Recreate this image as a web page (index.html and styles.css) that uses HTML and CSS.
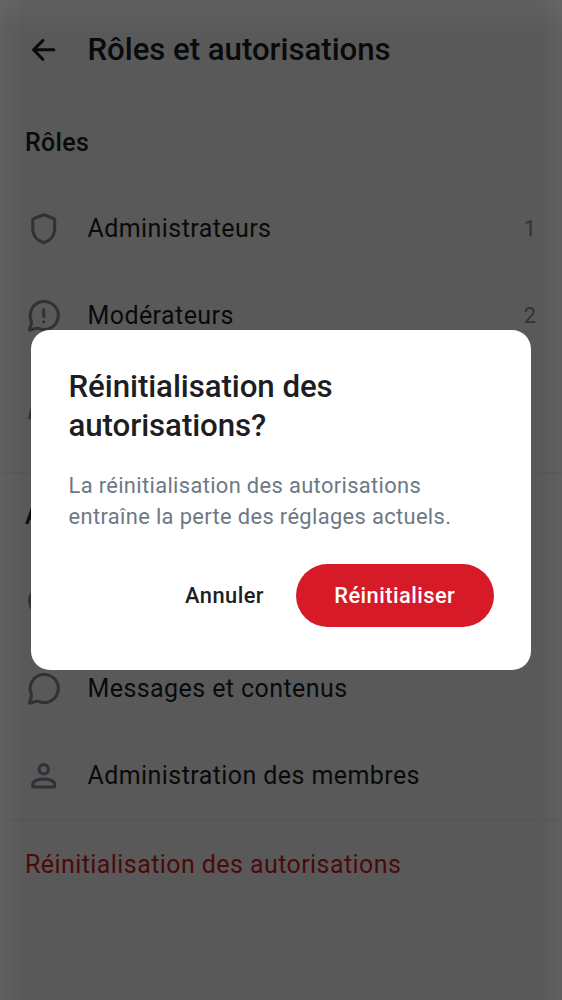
FILE: index.html
```html
<!DOCTYPE html>
<html lang="fr">
<head>
<meta charset="utf-8">
<title>Rôles et autorisations</title>
<link rel="stylesheet" href="styles.css">
</head>
<body>
<main class="screen">
  <header class="app-bar">
    <svg class="icon back" viewBox="0 0 24 24"><path d="M18.400 12H5.800M11.400 6.100L5.500 12l5.900 6.100"/></svg>
    <h1 class="app-title">Rôles et autorisations</h1>
  </header>
  <section class="section roles">
    <h2 class="section-title">Rôles</h2>
    <div class="row">
      <svg class="icon" viewBox="0 0 24 24"><path d="M11.500 3.200Q12 3 12.500 3.200L18.300 5.400Q19 5.700 19 6.400V12C19 16.300 16.200 19.700 12 21C7.800 19.700 5 16.300 5 12V6.400Q5 5.700 5.700 5.400Z"/></svg>
      <span class="label">Administrateurs</span><span class="count">1</span>
    </div>
    <div class="row">
      <svg class="icon" viewBox="0 0 24 24"><path d="M4 15.300A9 9 0 1 1 8.700 20.100C6.700 19.600 4.700 21 2.800 21.200C3 19.200 4.700 17.500 4 15.300ZM12 8v4.500M12 15.900v.1"/></svg>
      <span class="label">Modérateurs</span><span class="count">2</span>
    </div>
    <div class="row">
      <svg class="icon" viewBox="0 0 24 24"><path d="M3 21l1.500-6L16 3.500l4.500 4.500L9 19.500z"/></svg>
    </div>
  </section>
  <section class="section">
    <h2 class="section-title">A</h2>
    <div class="row">
      <svg class="icon" viewBox="0 0 24 24"><circle cx="12" cy="12" r="9"/></svg>
    </div>
    <div class="row">
      <svg class="icon" viewBox="0 0 24 24"><path d="M4 15.300A9 9 0 1 1 8.700 20.100C6.700 19.600 4.700 21 2.800 21.200C3 19.200 4.700 17.500 4 15.300Z"/></svg>
      <span class="label">Messages et contenus</span>
    </div>
    <div class="row">
      <svg class="icon" viewBox="0 0 24 24"><circle cx="12" cy="7.900" r="3"/><path d="M5 17.400C5 15.300 8.200 14.200 12 14.200S19 15.300 19 17.400V18.400Q19 19.200 18.200 19.200H5.800Q5 19.200 5 18.400Z"/></svg>
      <span class="label">Administration des membres</span>
    </div>
  </section>
  <div class="row"><span class="label danger">Réinitialisation des autorisations</span></div>
</main>
<div class="scrim">
  <div class="dialog" role="dialog">
    <h2 class="dialog-title">Réinitialisation des autorisations?</h2>
    <p class="dialog-text">La réinitialisation des autorisations entraîne la perte des réglages actuels.</p>
    <div class="actions">
      <button class="btn">Annuler</button>
      <button class="btn primary">Réinitialiser</button>
    </div>
  </div>
</div>
</body>
</html>
```
FILE: styles.css
```css
* { box-sizing: border-box; }
body { margin: 0; font-family: Roboto, sans-serif; color: #1c1e24; background: #fff; }
h1, h2, p { margin: 0; font-weight: 500; }
.screen { height: 1000px; overflow: hidden; }
.app-bar { height: 99.5px; padding: 0 25px; display: flex; align-items: center; gap: 25px; }
.app-title { font-size: 31.25px; letter-spacing: -.06px; }
.section { border-bottom: 1px solid #f0f0f0; }
.roles { padding-bottom: 24.5px; }
.section-title { height: 85px; line-height: 85px; padding-left: 25px; font-size: 25px; letter-spacing: .3px; }
.section + .section .section-title { height: 84.5px; }
.row { height: 87.5px; padding: 0 26px 0 25px; display: flex; align-items: center; gap: 25px; }
.label { font-size: 25px; letter-spacing: .42px; flex: 1; }
.danger { color: #d71a28; }
.count { font-size: 21.875px; color: #868f9b; }
.icon { width: 37.5px; height: 37.5px; fill: none; stroke: #868f9b; stroke-width: 2; stroke-linecap: round; stroke-linejoin: round; }
.back { stroke: #1c1e24; }
/* The dimming layer is lightest along the top and side edges. */
.scrim {
  position: absolute; inset: 0; height: 1000px;
  display: flex; align-items: center; justify-content: center;
  background:
    linear-gradient(180deg, rgba(255, 255, 255, .045), transparent 32px),
    linear-gradient(90deg, rgba(255, 255, 255, .04), transparent 24px),
    linear-gradient(270deg, rgba(255, 255, 255, .04), transparent 24px),
    rgba(0, 0, 0, .65);
}
.dialog { width: 500px; height: 340px; padding: 37px 37.5px; border-radius: 19px; background: #fff; }
.dialog-title { font-size: 31.25px; line-height: 39px; letter-spacing: -.07px; }
.dialog-text { margin-top: 24.5px; font-size: 21.875px; font-weight: 400; line-height: 31.25px; letter-spacing: .36px; color: #6d7885; }
.actions { margin-top: 32px; display: flex; justify-content: flex-end; gap: 32px; }
.btn { height: 62.5px; padding: 0; border: 0; background: none; font: 500 21.875px Roboto, sans-serif; letter-spacing: .45px; color: #1c1e24; }
.primary { width: 197.5px; border-radius: 32px; background: #d71a28; color: #fff; }
```
